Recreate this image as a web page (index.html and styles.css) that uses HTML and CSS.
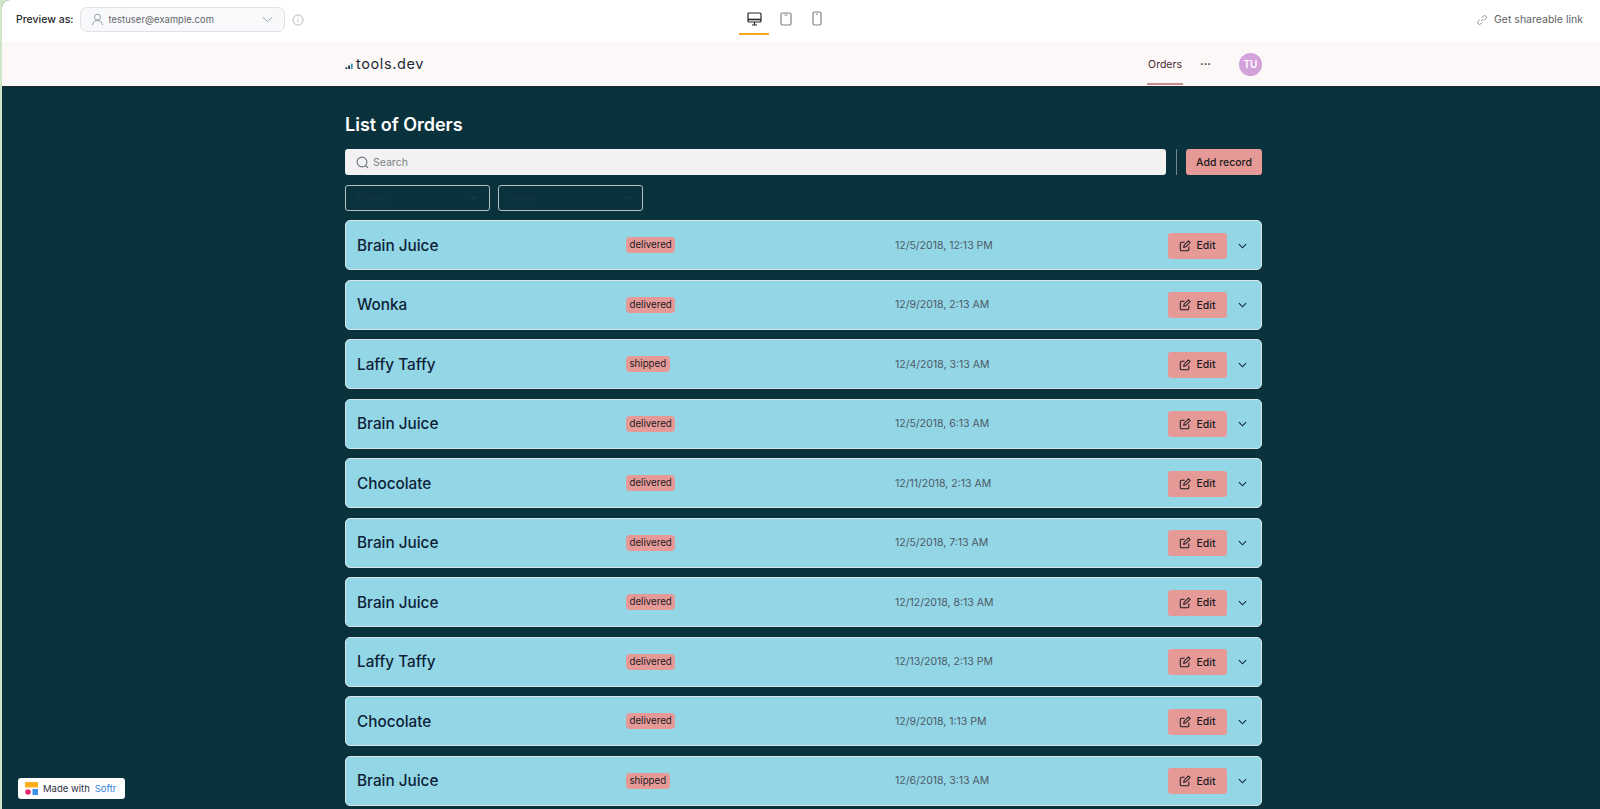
FILE: index.html
```html
<!DOCTYPE html>
<html lang="en">
<head>
<meta charset="utf-8">
<title>List of Orders</title>
<link rel="stylesheet" href="styles.css">
</head>
<body>
<div class="frame">
  <header class="topbar">
    <div class="preview">
      <span class="preview-label">Preview as:</span>
      <div class="user-select">
        <svg class="ico-user" viewBox="0 0 14 14" fill="none" stroke="#8f9499" stroke-width="1"><circle cx="7" cy="4.5" r="3.2"/><path d="M1.5 13c.6-3 2.6-5 5.5-5s4.900 2 5.500 5"/></svg>
        <span class="user-text">testuser@example.com</span>
        <svg class="ico-down" viewBox="0 0 12 7" fill="none" stroke="#8f9499" stroke-width="1"><path d="M1 1l5 5 5-5"/></svg>
      </div>
      <svg class="ico-info" viewBox="0 0 12 12" fill="none" stroke="#a5a8ac" stroke-width=".8"><circle cx="6" cy="6" r="5"/><path d="M6 5.500v3M6 3.300v1"/></svg>
    </div>
    <div class="devices">
      <div class="device device-active">
        <svg width="15" height="14" viewBox="0 0 15 14" fill="none" stroke="#23272b" stroke-width="1.200"><rect x="1" y="1" width="13" height="9" rx="1"/><path d="M1 7.500h13" stroke-width="1.600"/><path d="M7.500 10v3M5 13h5"/></svg>
      </div>
      <div class="device">
        <svg width="12" height="14" viewBox="0 0 12 14" fill="none" stroke="#7d8186" stroke-width="1.200"><rect x="1" y="1" width="10" height="12" rx="1.500"/><path d="M4.500 3h3" stroke-width="1"/></svg>
      </div>
      <div class="device">
        <svg width="10" height="15" viewBox="0 0 10 15" fill="none" stroke="#7d8186" stroke-width="1.200"><rect x="1" y="1" width="8" height="13" rx="1.500"/><path d="M4 3h2" stroke-width="1"/></svg>
      </div>
    </div>
    <div class="share">
      <svg class="ico-link" viewBox="0 0 12 12" fill="none" stroke="#7d8186" stroke-width=".9"><path d="M5 7l2-2M3.800 5.600L2.200 7.200a1.800 1.800 0 0 0 2.600 2.600L6.400 8.200M5.600 3.800l1.600-1.600a1.800 1.800 0 0 1 2.600 2.600L8.200 6.400"/></svg>
      <span>Get shareable link</span>
    </div>
  </header>

  <nav class="sitebar">
    <div class="container sitebar-inner">
      <div class="logo">
        <svg class="logo-mark" viewBox="0 0 10 9"><rect x="0" y="7" width="2" height="2" fill="#1b3a4b"/><rect x="3" y="5" width="2" height="4" fill="#1b3a4b"/><rect x="6" y="3" width="2" height="6" fill="#3a8fb0"/></svg>
        <span>tools.dev</span>
      </div>
      <div class="nav-right">
        <a class="nav-link">Orders</a>
        <span class="nav-more">···</span>
        <span class="avatar">TU</span>
      </div>
    </div>
  </nav>

  <main class="container content">
    <h1 class="title">List of Orders</h1>
    <div class="search-row">
      <div class="search">
        <svg width="13" height="13" viewBox="0 0 13 13" fill="none" stroke="#6b7280" stroke-width="1.100"><circle cx="6" cy="6" r="4.900"/><path d="M9.600 9.600L12 12"/></svg>
        <span>Search</span>
      </div>
      <div class="divider"></div>
      <button class="btn-add">Add record</button>
    </div>
    <div class="filters">
      <div class="filter"><span>status</span><svg width="8" height="5" viewBox="0 0 8 5" fill="none" stroke="#1d3f4a" stroke-width="1"><path d="M1 1l3 3 3-3"/></svg></div>
      <div class="filter"><span>name</span><svg width="8" height="5" viewBox="0 0 8 5" fill="none" stroke="#1d3f4a" stroke-width="1"><path d="M1 1l3 3 3-3"/></svg></div>
    </div>
    <div class="list">
      <article class="card"><h2 class="name">Brain Juice</h2><div class="status"><span class="tag">delivered</span></div><div class="date">12/5/2018, 12:13 PM</div><div class="actions"><button class="btn-edit"><svg class="ico-edit" viewBox="0 0 14 14" fill="none" stroke="#1b1b1f" stroke-width="1.200"><path d="M6.500 2.500H3a1.500 1.500 0 0 0-1.500 1.500v7A1.500 1.500 0 0 0 3 12.500h7a1.500 1.500 0 0 0 1.500-1.500V7.500"/><path d="M5.500 8.500l.5-2.500 5-5 2 2-5 5z"/></svg>Edit</button><svg class="ico-chev" viewBox="0 0 10 6" fill="none" stroke="#10233a" stroke-width="1.200"><path d="M1 1l4 4 4-4"/></svg></div></article>
      <article class="card"><h2 class="name">Wonka</h2><div class="status"><span class="tag">delivered</span></div><div class="date">12/9/2018, 2:13 AM</div><div class="actions"><button class="btn-edit"><svg class="ico-edit" viewBox="0 0 14 14" fill="none" stroke="#1b1b1f" stroke-width="1.200"><path d="M6.500 2.500H3a1.500 1.500 0 0 0-1.500 1.500v7A1.500 1.500 0 0 0 3 12.500h7a1.500 1.500 0 0 0 1.500-1.500V7.500"/><path d="M5.500 8.500l.5-2.500 5-5 2 2-5 5z"/></svg>Edit</button><svg class="ico-chev" viewBox="0 0 10 6" fill="none" stroke="#10233a" stroke-width="1.200"><path d="M1 1l4 4 4-4"/></svg></div></article>
      <article class="card"><h2 class="name">Laffy Taffy</h2><div class="status"><span class="tag">shipped</span></div><div class="date">12/4/2018, 3:13 AM</div><div class="actions"><button class="btn-edit"><svg class="ico-edit" viewBox="0 0 14 14" fill="none" stroke="#1b1b1f" stroke-width="1.200"><path d="M6.500 2.500H3a1.500 1.500 0 0 0-1.500 1.500v7A1.500 1.500 0 0 0 3 12.500h7a1.500 1.500 0 0 0 1.500-1.500V7.500"/><path d="M5.500 8.500l.5-2.500 5-5 2 2-5 5z"/></svg>Edit</button><svg class="ico-chev" viewBox="0 0 10 6" fill="none" stroke="#10233a" stroke-width="1.200"><path d="M1 1l4 4 4-4"/></svg></div></article>
      <article class="card"><h2 class="name">Brain Juice</h2><div class="status"><span class="tag">delivered</span></div><div class="date">12/5/2018, 6:13 AM</div><div class="actions"><button class="btn-edit"><svg class="ico-edit" viewBox="0 0 14 14" fill="none" stroke="#1b1b1f" stroke-width="1.200"><path d="M6.500 2.500H3a1.500 1.500 0 0 0-1.500 1.500v7A1.500 1.500 0 0 0 3 12.500h7a1.500 1.500 0 0 0 1.500-1.500V7.500"/><path d="M5.500 8.500l.5-2.500 5-5 2 2-5 5z"/></svg>Edit</button><svg class="ico-chev" viewBox="0 0 10 6" fill="none" stroke="#10233a" stroke-width="1.200"><path d="M1 1l4 4 4-4"/></svg></div></article>
      <article class="card"><h2 class="name">Chocolate</h2><div class="status"><span class="tag">delivered</span></div><div class="date">12/11/2018, 2:13 AM</div><div class="actions"><button class="btn-edit"><svg class="ico-edit" viewBox="0 0 14 14" fill="none" stroke="#1b1b1f" stroke-width="1.200"><path d="M6.500 2.500H3a1.500 1.500 0 0 0-1.500 1.500v7A1.500 1.500 0 0 0 3 12.500h7a1.500 1.500 0 0 0 1.500-1.500V7.500"/><path d="M5.500 8.500l.5-2.500 5-5 2 2-5 5z"/></svg>Edit</button><svg class="ico-chev" viewBox="0 0 10 6" fill="none" stroke="#10233a" stroke-width="1.200"><path d="M1 1l4 4 4-4"/></svg></div></article>
      <article class="card"><h2 class="name">Brain Juice</h2><div class="status"><span class="tag">delivered</span></div><div class="date">12/5/2018, 7:13 AM</div><div class="actions"><button class="btn-edit"><svg class="ico-edit" viewBox="0 0 14 14" fill="none" stroke="#1b1b1f" stroke-width="1.200"><path d="M6.500 2.500H3a1.500 1.500 0 0 0-1.500 1.500v7A1.500 1.500 0 0 0 3 12.500h7a1.500 1.500 0 0 0 1.500-1.500V7.500"/><path d="M5.500 8.500l.5-2.500 5-5 2 2-5 5z"/></svg>Edit</button><svg class="ico-chev" viewBox="0 0 10 6" fill="none" stroke="#10233a" stroke-width="1.200"><path d="M1 1l4 4 4-4"/></svg></div></article>
      <article class="card"><h2 class="name">Brain Juice</h2><div class="status"><span class="tag">delivered</span></div><div class="date">12/12/2018, 8:13 AM</div><div class="actions"><button class="btn-edit"><svg class="ico-edit" viewBox="0 0 14 14" fill="none" stroke="#1b1b1f" stroke-width="1.200"><path d="M6.500 2.500H3a1.500 1.500 0 0 0-1.500 1.500v7A1.500 1.500 0 0 0 3 12.500h7a1.500 1.500 0 0 0 1.500-1.500V7.500"/><path d="M5.500 8.500l.5-2.500 5-5 2 2-5 5z"/></svg>Edit</button><svg class="ico-chev" viewBox="0 0 10 6" fill="none" stroke="#10233a" stroke-width="1.200"><path d="M1 1l4 4 4-4"/></svg></div></article>
      <article class="card"><h2 class="name">Laffy Taffy</h2><div class="status"><span class="tag">delivered</span></div><div class="date">12/13/2018, 2:13 PM</div><div class="actions"><button class="btn-edit"><svg class="ico-edit" viewBox="0 0 14 14" fill="none" stroke="#1b1b1f" stroke-width="1.200"><path d="M6.500 2.500H3a1.500 1.500 0 0 0-1.500 1.500v7A1.500 1.500 0 0 0 3 12.500h7a1.500 1.500 0 0 0 1.500-1.500V7.500"/><path d="M5.500 8.500l.5-2.500 5-5 2 2-5 5z"/></svg>Edit</button><svg class="ico-chev" viewBox="0 0 10 6" fill="none" stroke="#10233a" stroke-width="1.200"><path d="M1 1l4 4 4-4"/></svg></div></article>
      <article class="card"><h2 class="name">Chocolate</h2><div class="status"><span class="tag">delivered</span></div><div class="date">12/9/2018, 1:13 PM</div><div class="actions"><button class="btn-edit"><svg class="ico-edit" viewBox="0 0 14 14" fill="none" stroke="#1b1b1f" stroke-width="1.200"><path d="M6.500 2.500H3a1.500 1.500 0 0 0-1.500 1.500v7A1.500 1.500 0 0 0 3 12.500h7a1.500 1.500 0 0 0 1.500-1.500V7.500"/><path d="M5.500 8.500l.5-2.500 5-5 2 2-5 5z"/></svg>Edit</button><svg class="ico-chev" viewBox="0 0 10 6" fill="none" stroke="#10233a" stroke-width="1.200"><path d="M1 1l4 4 4-4"/></svg></div></article>
      <article class="card"><h2 class="name">Brain Juice</h2><div class="status"><span class="tag">shipped</span></div><div class="date">12/6/2018, 3:13 AM</div><div class="actions"><button class="btn-edit"><svg class="ico-edit" viewBox="0 0 14 14" fill="none" stroke="#1b1b1f" stroke-width="1.200"><path d="M6.500 2.500H3a1.500 1.500 0 0 0-1.500 1.500v7A1.500 1.500 0 0 0 3 12.500h7a1.500 1.500 0 0 0 1.500-1.500V7.500"/><path d="M5.500 8.500l.5-2.500 5-5 2 2-5 5z"/></svg>Edit</button><svg class="ico-chev" viewBox="0 0 10 6" fill="none" stroke="#10233a" stroke-width="1.200"><path d="M1 1l4 4 4-4"/></svg></div></article>
    </div>
  </main>

  <div class="badge">
    <svg width="13" height="13" viewBox="0 0 13 13"><rect x="0" y="0" width="13" height="5.500" fill="#fdae1c"/><circle cx="3" cy="10" r="2.800" fill="#ec2a6a"/><rect x="7.500" y="7" width="5.500" height="6" fill="#3a8fe8"/></svg>
    <span class="badge-text">Made with</span>
    <span class="badge-brand">Softr</span>
  </div>
</div>
</body>
</html>
```

FILE: styles.css
```css
* { box-sizing: border-box; }
html, body { margin: 0; padding: 0; height: 100%; overflow: hidden; }
body { background: #cfe6c9; font-family: Inter, "Liberation Sans", sans-serif; }
.frame { position: relative; height: 809px; margin-left: 2px; background: #0a323d; border-top-left-radius: 8px; overflow: hidden; display: flex; flex-direction: column; }
.topbar { height: 42px; flex: none; background: #fff; display: grid; grid-template-columns: 1fr auto 1fr; align-items: start; padding: 0 17px 0 14px; }
.preview { display: flex; align-items: center; height: 25px; margin-top: 7px; }
.preview-label { font-size: 10.5px; font-weight: 500; color: #26292d; margin-right: 6px; }
.user-select { width: 205px; height: 25px; border: 1px solid #dfe1e4; border-radius: 7px; background: #f8f9fa; display: flex; align-items: center; padding: 0 6px 0 10px; font-size: 9.3px; color: #5f6368; }
.ico-user { width: 13px; height: 13px; margin-right: 5px; }
.user-text { flex: 1; letter-spacing: .1px; }
.ico-down { width: 11px; height: 7px; margin-right: 5px; }
.ico-info { width: 12px; height: 12px; margin-left: 7px; }
.devices { display: flex; gap: 2px; margin-right: 28px; height: 42px; }
.device { width: 29.500px; height: 35px; display: flex; align-items: center; justify-content: center; padding-top: 4px; border-bottom: 2px solid transparent; }
.device-active { border-bottom-color: #f5a623; }
.share { display: flex; align-items: center; justify-content: flex-end; gap: 6px; height: 25px; margin-top: 7px; font-size: 10.500px; color: #5f6368; }
.ico-link { width: 12px; height: 12px; }
.sitebar { height: 45px; flex: none; background: #fcf8f7; border-bottom: 1px solid #1a2a30; }
.container { width: 917px; margin-left: 343px; }
.sitebar-inner { height: 44px; display: flex; align-items: center; justify-content: space-between; }
.logo { display: flex; align-items: center; font-size: 14.500px; color: #1b2a35; letter-spacing: .6px; margin-top: -2px; }
.logo-mark { width: 10px; height: 8px; margin-top: 4px; margin-right: 1px; }
.nav-right { display: flex; align-items: center; height: 100%; }
.nav-link { align-self: flex-start; height: 43px; display: flex; align-items: center; font-size: 10.500px; color: #4a2b2f; padding: 3px 1px 0; border-bottom: 2px solid #c98b8b; margin-right: 17px; }
.nav-more { font-size: 11px; font-weight: 700; color: #4a2b2f; margin-right: 28px; }
.avatar { width: 23px; height: 23px; border-radius: 50%; background: #d4a2db; color: #fff; font-size: 10px; font-weight: 600; display: flex; align-items: center; justify-content: center; }
.content { display: flex; flex-direction: column; }
.title { margin: 27px 0 13px; font-size: 18px; line-height: 22px; font-weight: 600; color: #fff; }
.search-row { display: flex; align-items: center; height: 26px; }
.search { flex: 1; height: 26px; background: #f2f2f3; border-radius: 3px; display: flex; align-items: center; gap: 4px; padding-left: 11px; font-size: 10.500px; color: #7a7f87; }
.divider { width: 1px; height: 26px; background: #6e8790; margin: 0 9.500px 0 10px; }
.btn-add { width: 76px; height: 26px; border: 0; background: #e69a98; border-radius: 3px; font: 500 10.500px Inter, sans-serif; color: #1a1a1f; padding: 0; }
.filters { display: flex; gap: 7.500px; margin-top: 9.500px; }
.filter { width: 145px; height: 26px; border: 1px solid #b3bfc3; border-radius: 3px; display: flex; align-items: center; justify-content: space-between; padding: 0 11px 0 9px; font-size: 10.500px; color: #173741; }
.list { display: flex; flex-direction: column; gap: 9.500px; margin-top: 9.500px; }
.card { height: 50px; flex: none; background: #93d6e6; border: 1px solid #d8e6ea; border-radius: 5px; display: grid; grid-template-columns: 269px 269px 1fr; align-items: center; padding-left: 11px; position: relative; }
.name { margin: 0; font-size: 15.300px; font-weight: 500; color: #0e1f38; }
.status { display: flex; }
.tag { background: #e69a98; border-radius: 4px; padding: 1px 3.500px; font-size: 9.700px; line-height: 14px; color: #1a1a1f; }
.date { font-size: 10.500px; color: #4d5a66; }
.actions { position: absolute; right: 14px; top: 11.500px; display: flex; align-items: center; gap: 11px; }
.btn-edit { width: 59px; height: 26px; border: 0; background: #e69a98; border-radius: 3px; display: flex; align-items: center; justify-content: center; gap: 5px; font: 500 10.500px Inter, sans-serif; color: #1a1a1f; padding: 0; }
.ico-edit { width: 12px; height: 12px; }
.ico-chev { width: 9px; height: 6px; }
.badge { position: absolute; left: 16px; top: 778px; width: 107px; height: 21px; background: #fff; border-radius: 3px; display: flex; align-items: center; padding-left: 7px; font-size: 9.500px; }
.badge-text { margin-left: 5px; color: #2c3140; }
.badge-brand { margin-left: 5px; color: #2e7fd9; }
```
